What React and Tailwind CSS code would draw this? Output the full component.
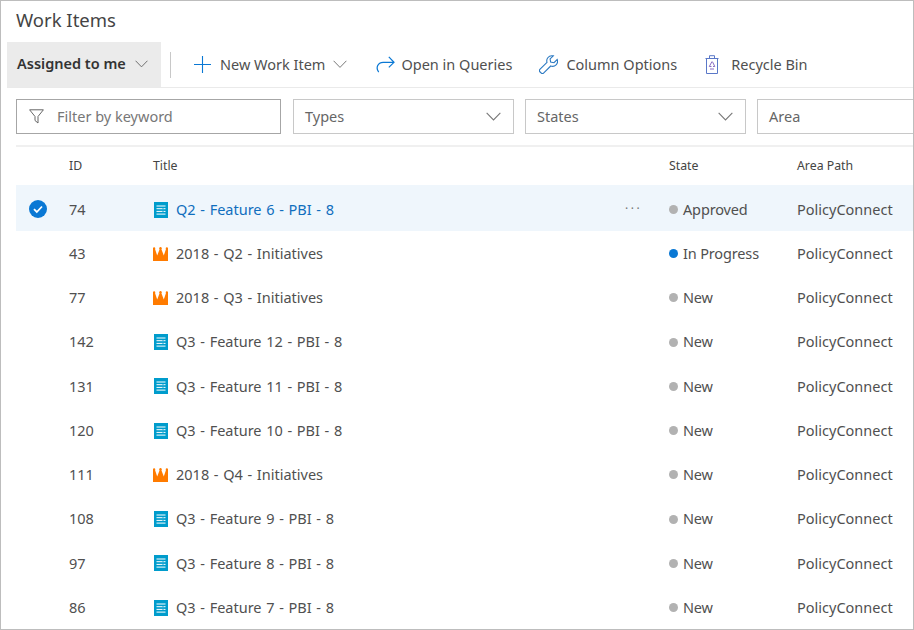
import React from "react";

const Chevron = ({ w = 14, c = "#666", cls = "" }) => (
  <svg width={w} height={w * 0.6} viewBox="0 0 14 8.4" fill="none" className={cls}>
    <path d="M0.6 0.8 L7 7.4 L13.4 0.8" stroke={c} strokeWidth="1" />
  </svg>
);

const Pbi = () => (
  <svg width="14" height="16" viewBox="0 0 14 16" className="shrink-0 ml-px">
    <rect width="14" height="16" fill="#009ccc" />
    <path d="M2.5 4h9M2.5 6.700h9M2.5 9.400h9M2.5 12.100h9" stroke="#fff" strokeWidth="1" />
    <path d="M8.500 6.700h1M8.500 9.400h1" stroke="#009ccc" strokeWidth="1" />
  </svg>
);

const Crown = () => (
  <svg width="15" height="14" viewBox="0 0 15 14" className="shrink-0">
    <circle cx="1.100" cy="1.500" r="1.200" fill="#ff7b00" />
    <circle cx="7.500" cy="1.200" r="1.200" fill="#ff7b00" />
    <circle cx="13.900" cy="1.500" r="1.200" fill="#ff7b00" />
    <path d="M0 2 L2 2 L4.200 8.500 L6.700 2 H8.300 L10.800 8.500 L13 2 L15 2 V14 H0 Z" fill="#ff7b00" />
  </svg>
);

const rows = [
  ["74", "pbi", "Q2 - Feature 6 - PBI - 8", "Approved"],
  ["43", "crown", "2018 - Q2 - Initiatives", "In Progress"],
  ["77", "crown", "2018 - Q3 - Initiatives", "New"],
  ["142", "pbi", "Q3 - Feature 12 - PBI - 8", "New"],
  ["131", "pbi", "Q3 - Feature 11 - PBI - 8", "New"],
  ["120", "pbi", "Q3 - Feature 10 - PBI - 8", "New"],
  ["111", "crown", "2018 - Q4 - Initiatives", "New"],
  ["108", "pbi", "Q3 - Feature 9 - PBI - 8", "New"],
  ["97", "pbi", "Q3 - Feature 8 - PBI - 8", "New"],
  ["86", "pbi", "Q3 - Feature 7 - PBI - 8", "New"],
];

const ToolButton = ({ icon, label, cls = "" }) => (
  <div className={"flex items-center " + cls}>
    {icon}
    <span>{label}</span>
  </div>
);

const Select = ({ label, cls }) => (
  <div className={"h-[35px] border border-[#c8c8c8] flex items-center justify-between pl-[11px] pr-[12px] text-[#666] shrink-0 " + cls}>
    <span>{label}</span>
    <Chevron w={15} c="#777" />
  </div>
);

export default function App() {
  return (
    <div
      className="w-[914px] h-[630px] bg-white border border-[#bdbdbd] overflow-hidden text-[14.5px] text-[#505050]"
      style={{ fontFamily: '"Noto Sans", sans-serif' }}
    >
      <div className="h-[41px] pl-[15px] flex items-center text-[18.500px] text-[#444] pb-[4px]">Work Items</div>

      <div className="ml-[6px] h-[46px] flex items-center border-b border-[#eaeaea]">
        <div className="w-[154px] h-[45px] -mb-px self-start bg-[#ebebeb] flex items-center pl-[10px] pb-[2px] font-semibold text-[#333] shrink-0">
          <span>Assigned to me</span>
          <Chevron w={13} c="#666" cls="ml-[9px]" />
        </div>
        <div className="w-px h-[26px] bg-[#c8c8c8] ml-[9px] mr-[23px]" />
        <ToolButton
          label="New Work Item"
          icon={
            <svg width="17" height="17" viewBox="0 0 17 17" className="mr-[9px]">
              <path d="M8.500 0v17M0 8.500h17" stroke="#0a78d4" strokeWidth="1.100" />
            </svg>
          }
        />
        <Chevron w={14} c="#777" cls="ml-[8px] mr-[29px]" />
        <ToolButton
          label="Open in Queries"
          cls="mr-[27px]"
          icon={
            <svg width="19" height="17" viewBox="0 0 20 18" fill="none" className="mr-[6px]">
              <path d="M2.800 17 C-0.500 13 1.500 6.700 7.500 6.700 H18.500 M13.500 1 L19 6.700 L13.500 12" stroke="#0a78d4" strokeWidth="1.300" />
            </svg>
          }
        />
        <ToolButton
          label="Column Options"
          cls="mr-[28px]"
          icon={
            <svg width="19" height="19" viewBox="0 0 19 19" fill="none" className="mr-[8px]">
              <path
                d="M13 .8 a5 5 0 0 0 -5 6.500 L1.100 14.200 a2 2 0 0 0 0 2.800 l.9.9 a2 2 0 0 0 2.800 0 L11.700 11 a5 5 0 0 0 6.500 -6.500 L15 7.700 l-3.400 -.6 -.5 -3.200 L14.300 .9 a5 5 0 0 0 -1.300 -.1 Z"
                stroke="#2b79c2"
                strokeWidth="1.100"
              />
            </svg>
          }
        />
        <ToolButton
          label="Recycle Bin"
          icon={
            <svg width="14" height="19" viewBox="0 0 14 19" fill="none" className="mr-[12px]">
              <path d="M.5 3.500h13M4.500 3.500V.7h5v2.800M1.500 3.500V18.500h11V3.500" stroke="#5a78c8" strokeWidth="1" />
              <path d="M7 6.500 L4.300 11.500 H6.500 M7.500 6.800 L9.800 11.500 H8 M5 14 H9" stroke="#8a6cc4" strokeWidth="1" />
            </svg>
          }
        />
      </div>

      <div className="flex items-center gap-[11px] ml-[15px] mt-[11px] w-[900px]">
        <div className="w-[265px] h-[35px] mr-px border border-[#a6a6a6] flex items-center pl-[12px] text-[#777] shrink-0">
          <svg width="15" height="15" viewBox="0 0 15 15" fill="none" className="mr-[13px]">
            <path d="M.6 .8 H14.400 L9 7.500 V14 L6 11.500 V7.500 Z" stroke="#666" strokeWidth="1" />
          </svg>
          <span>Filter by keyword</span>
        </div>
        <Select label="Types" cls="w-[221px]" />
        <Select label="States" cls="w-[221px]" />
        <div className="h-[35px] w-[200px] border border-[#c8c8c8] border-r-0 flex items-center pl-[11px] text-[#666] shrink-0">Area</div>
      </div>

      <div className="ml-[15px] mt-[11px] h-[2px] bg-[#f0f0f0]" />

      <div className="ml-[15px] h-[38px] flex items-center text-[12.300px] text-[#444]">
        <div className="w-[53px]" />
        <div className="w-[84px]">ID</div>
        <div className="w-[516px]">Title</div>
        <div className="w-[128px]">State</div>
        <div>Area Path</div>
      </div>

      {rows.map(([id, type, title, state], i) => (
        <div
          key={id}
          className={"ml-[15px] flex items-center whitespace-nowrap " + (i === 0 ? "h-[45.500px] pt-[4px] bg-[#eff6fc]" : "h-[44.250px] pt-[2px]")}
        >
          <div className="w-[53px] flex justify-start pl-[13px] -mt-[2px]">
            {i === 0 && (
              <svg width="18" height="18" viewBox="0 0 18 18">
                <circle cx="9" cy="9" r="9" fill="#0a78d4" />
                <path d="M5 9.200 L7.800 12 L13 6.500" fill="none" stroke="#fff" strokeWidth="1.800" />
              </svg>
            )}
          </div>
          <div className="w-[84px]">{id}</div>
          <div className="w-[516px] flex items-center relative">
            <div className="w-[23px] flex">{type === "pbi" ? <Pbi /> : <Crown />}</div>
            <span className={"[word-spacing:0.9px] " + (i === 0 ? "text-[#106ebe]" : "")}>{title}</span>
            {i === 0 && <span className="absolute left-[472px] top-[1px] text-[#777] text-[12px] tracking-[2.500px]">···</span>}
          </div>
          <div className="w-[128px] flex items-center">
            <span className={"w-[9px] h-[9px] rounded-full mr-[5px] " + (state === "In Progress" ? "bg-[#0a78d4]" : "bg-[#b2b2b2]")} />
            <span className="tracking-[-0.15px]">{state}</span>
          </div>
          <div>PolicyConnect</div>
        </div>
      ))}
    </div>
  );
}
